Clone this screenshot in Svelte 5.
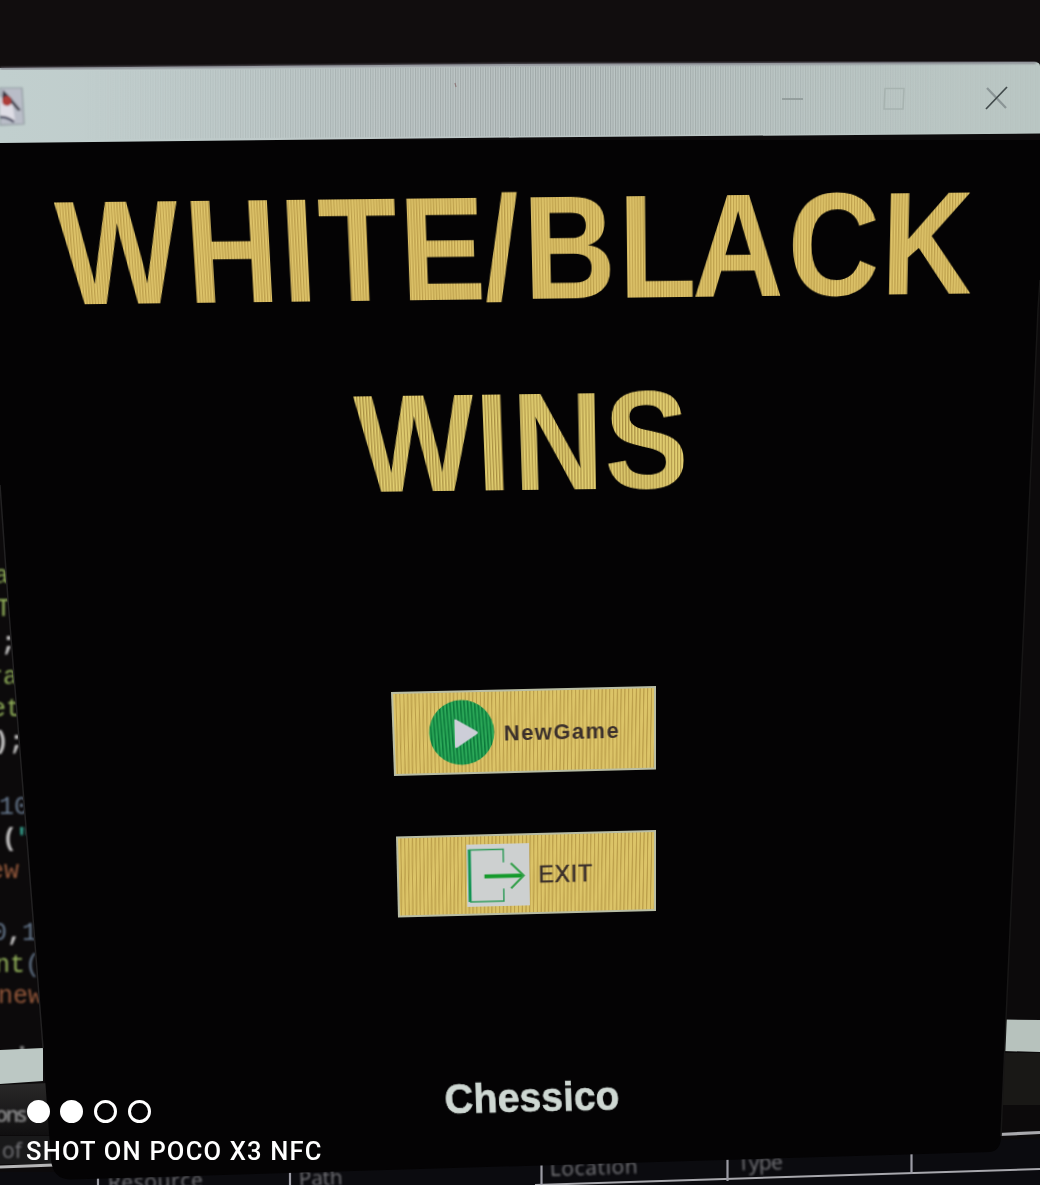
<script>
  // Builds the CSS matrix that maps a w×h box onto four corners
  // (top-left, top-right, bottom-right, bottom-left), relative to the box origin.
  function project(w, h, ox, oy, corners) {
    const [[x0, y0], [x1, y1], [x2, y2], [x3, y3]] = corners.map(([x, y]) => [x - ox, y - oy]);
    const dx1 = x1 - x2, dx2 = x3 - x2, sx = x0 - x1 + x2 - x3;
    const dy1 = y1 - y2, dy2 = y3 - y2, sy = y0 - y1 + y2 - y3;
    const den = dx1 * dy2 - dx2 * dy1;
    const g = (sx * dy2 - dx2 * sy) / den;
    const k = (dx1 * sy - sx * dy1) / den;
    const m = [
      (x1 - x0 + g * x1) / w, (y1 - y0 + g * y1) / w, 0, g / w,
      (x3 - x0 + k * x3) / h, (y3 - y0 + k * y3) / h, 0, k / h,
      0, 0, 1, 0,
      x0, y0, 0, 1
    ];
    return `matrix3d(${m.map((v) => v.toFixed(9)).join(',')})`;
  }

  const tilt = {
    title: project(920, 100, 60, 200, [[53, 202.5], [973, 192.5], [970, 293.5], [61, 304.5]]),
    wins: project(330, 96, 355, 395, [[353, 396.5], [684, 392], [684, 488], [359, 492]]),
    play: project(264, 84, 388, 690, [[391, 692], [656, 686], [656, 769.5], [394, 776]]),
    exit: project(260, 82, 390, 833, [[396, 836.5], [656, 830], [656, 911], [398, 917.5]]),
    brand: project(176, 28, 432, 1084, [[444, 1083.5], [619, 1080], [620, 1109.5], [445, 1113.5]])
  };
</script>

<div class="photo">
  <svg class="scene" viewBox="0 0 1040 1185" aria-hidden="true">
    <defs>
      <linearGradient id="fadeBand" x1="0" y1="0" x2="0" y2="1">
        <stop offset="0" stop-color="#292828" />
        <stop offset="1" stop-color="#100f10" />
      </linearGradient>
      <linearGradient id="bar" x1="0" y1="0" x2="1" y2="0">
        <stop offset="0" stop-color="#c1cfce" />
        <stop offset="0.45" stop-color="#bdc6c6" />
        <stop offset="1" stop-color="#bac7c4" />
      </linearGradient>
      <linearGradient id="moireFade" x1="0" y1="0" x2="1" y2="0">
        <stop offset="0.08" stop-color="#000" />
        <stop offset="0.35" stop-color="#aaa" />
        <stop offset="0.55" stop-color="#fff" />
        <stop offset="0.72" stop-color="#999" />
        <stop offset="0.92" stop-color="#111" />
      </linearGradient>
      <mask id="moireMask"><rect width="1040" height="150" fill="url(#moireFade)" /></mask>
      <pattern id="barLines" width="2.5" height="10" patternUnits="userSpaceOnUse">
        <rect width="1.1" height="10" fill="#7d8585" />
      </pattern>
      <filter id="soft" x="-10%" y="-10%" width="120%" height="120%"><feGaussianBlur stdDeviation="0.8" /></filter>
    </defs>

    <rect width="1040" height="1185" fill="#0c0a0b" />
    <rect width="1040" height="70" fill="#110d0e" />

    <g class="code" filter="url(#soft)">
      <text class="green" x="-6" y="583">a</text>
      <text class="green" x="-4" y="616">T</text>
      <text class="white" x="1" y="650">;</text>
      <text class="green" x="-12" y="684">ra</text>
      <text class="green" x="-9" y="716">et</text>
      <text class="white" x="-6" y="749">);</text>
      <text class="blue" x="-1" y="814">10</text>
      <text class="white" x="2" y="846">(<tspan class="teal">"</tspan></text>
      <text class="rust" x="-11" y="878">ew</text>
      <text class="blue" x="-8" y="940">0<tspan class="white">,</tspan>1</text>
      <text class="green" x="-5" y="972">nt<tspan class="blue">(</tspan></text>
      <text class="rust" x="-2" y="1003">new</text>
      <rect class="speck" x="20" y="1046" width="4" height="5" />
    </g>

    <path d="M0 1050L43 1048V1081L0 1084Z" fill="#bcc8c4" />
    <path d="M0 1085L50 1083V1135H0Z" fill="url(#fadeBand)" />
    <path d="M0 1136H52V1164H0Z" fill="#19191a" />
    <path d="M0 1167L54 1165" stroke="#b5b5b6" stroke-width="3" />
    <path d="M1004 1019.5L1040 1020V1052L1003 1051Z" fill="#b7c2bd" />
    <path d="M1002 1053H1040V1105H1001Z" fill="#191816" />
    <path d="M999 1134.5L1040 1132.5" stroke="#a9a9ad" stroke-width="3.2" />
    <path d="M50 1172L1040 1138V1185H0V1172Z" fill="#0b0b0f" />
    <path d="M535 1185L1040 1169" stroke="#a8a8ad" stroke-width="2" />
    <path d="M98 1174V1185M290 1168V1185M541.500 1160V1185M727.500 1154V1181M911.500 1150V1174" stroke="#9b9ba4" stroke-width="2.2" />
    <g class="heads" filter="url(#soft)">
      <text transform="translate(108 1190) rotate(-1.800)" textLength="95">Resource</text>
      <text transform="translate(299 1186) rotate(-1.800)" textLength="44">Path</text>
      <text transform="translate(550 1176) rotate(-1.800)" textLength="88">Location</text>
      <text transform="translate(738 1170.500) rotate(-1.800)" textLength="45">Type</text>
      <text class="bold" x="-5" y="1122" textLength="32">ons</text>
      <text x="2" y="1158">of</text>
    </g>

    <path d="M0 140H1040V290L1038 310L1006 1020L1001 1138Q1000 1151 990 1152L70 1179.500Q53 1179 51 1160L43 1050L27 840L8 600L0 480Z" fill="#040304" />
    <path d="M0 485L8 600L27 840L43 1048" fill="none" stroke="#222122" stroke-width="1.5" />
    <path d="M1040 280L1038 310L1006 1020L1001 1136" fill="none" stroke="#171616" stroke-width="1.500" />

    <path d="M0 68L520 64L1034 62Q1040 62 1040 66V133.500L520 137.500L0 143Z" fill="url(#bar)" />
    <path d="M0 72L520 67L1040 64V132L520 136L0 140Z" fill="url(#barLines)" mask="url(#moireMask)" opacity="0.5" />
    <path d="M0 68.500L520 64.500L1036 62.500" fill="none" stroke="#77747f" stroke-width="2" filter="url(#soft)" />
    <g filter="url(#soft)">
      <path d="M0 88H22L24 124L0 125Z" fill="#b9bdc8" stroke="#8e989d" stroke-width="1.200" />
      <path d="M0 97L12 99L15 121L0 117Z" fill="#dedde5" />
      <path d="M3 90L12 99L9 104L2 99Z" fill="#35303c" />
      <circle cx="7" cy="101" r="5" fill="#ad3c38" />
      <path d="M11 98L21 110L18 111L11 103Z" fill="#464753" />
      <path d="M0 117Q8 117 14 122" fill="none" stroke="#4a4b62" stroke-width="2.500" />
    </g>
    <path d="M455 83L456 87" stroke="#8b7778" stroke-width="1.200" />
    <path d="M782 99H803" stroke="#919b9a" stroke-width="1.800" />
    <path d="M885 88.500H904L903 109H884Z" fill="none" stroke="#a7b3b0" stroke-width="1.500" />
    <path d="M987 88L1006 108" stroke="#8b9596" stroke-width="2.300" />
    <path d="M986 109L1007 87" stroke="#414a4b" stroke-width="1.700" />
  </svg>

  <main>
    <h1 style:transform={tilt.title}>
      <svg viewBox="0 0 7136 688" preserveAspectRatio="none">
        <defs>
          <pattern id="goldWide" width="22" height="688" patternUnits="userSpaceOnUse">
            <rect width="22" height="688" fill="#e0c66c" />
            <rect width="9" height="688" fill="#bb9d4a" />
          </pattern>
        </defs>
        <text fill="url(#goldWide)" y="688" x="6 990 1729 2028 2655 3310 3618 4362 4938 5690 6426">WHITE/BLACK</text>
      </svg>
    </h1>
    <h2 style:transform={tilt.wins}>
      <svg viewBox="0 0 2600 688" preserveAspectRatio="none">
        <defs>
          <pattern id="goldNarrow" width="24" height="688" patternUnits="userSpaceOnUse">
            <rect width="24" height="688" fill="#e2cf72" />
            <rect width="9" height="688" fill="#a98f42" />
          </pattern>
        </defs>
        <text fill="url(#goldNarrow)" y="688" x="0 949 1242 1969">WINS</text>
      </svg>
    </h2>

    <button class="play" style:transform={tilt.play}>
      <svg class="icon" viewBox="0 0 66 66">
        <defs>
          <pattern id="greenLines" width="3.500" height="66" patternUnits="userSpaceOnUse" patternTransform="rotate(-3)">
            <rect width="3.500" height="66" fill="#2caa59" />
            <rect width="1.500" height="66" fill="#0a7639" />
          </pattern>
        </defs>
        <circle cx="33" cy="33" r="32.500" fill="url(#greenLines)" />
        <path d="M26 20.500Q26 19 28 20L48 32Q50 33.500 48 35L28 48Q26 49 26 47Z" fill="#cdced8" />
      </svg>
      <span>NewGame</span>
    </button>

    <button class="exit" style:transform={tilt.exit}>
      <svg class="icon" viewBox="0 0 64 64">
        <rect width="64" height="64" fill="#cdd0d0" />
        <path d="M3 5V59" stroke="#119453" stroke-width="3" />
        <path d="M3 5.500H37.500V19M37.500 46V59H3" fill="none" stroke="#329c5b" stroke-width="1.500" />
        <path d="M18 33H57" stroke="#159a2c" stroke-width="4" />
        <path d="M45 20L58 33L45 46" fill="none" stroke="#35a04b" stroke-width="2.200" />
      </svg>
      <span>EXIT</span>
    </button>

    <p class="brand" style:transform={tilt.brand}>Chessico</p>
  </main>

  <footer>
    <div class="dots"><i class="full"></i><i class="full"></i><i></i><i></i></div>
    <div class="shot">SHOT ON POCO X3 NFC</div>
  </footer>
</div>

<style>
  :global(body) { margin: 0; background: #0c0a0b; }
  .photo {
    position: relative;
    width: 1040px;
    height: 1185px;
    overflow: hidden;
    font-family: "Liberation Sans", Arial, sans-serif;
  }
  .scene { position: absolute; inset: 0; width: 1040px; height: 1185px; }
  .code { font: 25px "Liberation Mono", monospace; }
  .green { fill: #94b45c; }
  .white { fill: #c6c5c5; font-weight: bold; }
  .blue { fill: #66788e; }
  .teal { fill: #35a08d; }
  .rust { fill: #95583a; }
  .speck { fill: #777; }
  .heads { font: 21px "Open Sans", sans-serif; fill: #77777b; }
  .bold { font-weight: 600; fill: #8b8b8c; }

  main {
    position: relative;
    box-sizing: border-box;
    height: 1112px;
    padding-top: 200px;
    display: flex;
    flex-direction: column;
    align-items: center;
  }
  main > * { flex: none; margin: 0; transform-origin: 0 0; }
  h1, h2 { font-weight: bold; font-size: 1000px; line-height: 0; }
  h1 { width: 920px; height: 100px; }
  h2 { width: 330px; height: 96px; margin-top: 95px; }
  h1 svg, h2 svg { display: block; width: 100%; height: 100%; overflow: visible; }
  h1 text, h2 text { font-size: 1000px; font-kerning: none; }

  button {
    box-sizing: border-box;
    display: flex;
    align-items: center;
    padding: 0;
    border: 2px solid #b9bda4;
    border-radius: 0;
    color: #3b302c;
    font: bold 22px "Liberation Sans", Arial, sans-serif;
    background: repeating-linear-gradient(91deg, #dcc468 0 2px, #ba9d49 2.600px 3.200px, #dcc468 3.800px);
  }
  button span { padding-top: 3px; }
  .play { width: 264px; height: 84px; margin-top: 199px; padding-left: 34px; gap: 9px; letter-spacing: 1.5px; }
  .play .icon { width: 66px; height: 66px; }
  .exit { width: 260px; height: 82px; margin-top: 59px; padding-left: 67px; gap: 8px; font-weight: normal; font-size: 23px; letter-spacing: 0.9px; -webkit-text-stroke: 0.500px #3b302c; }
  .exit .icon { width: 65px; height: 63px; }

  .brand {
    width: 176px;
    height: 28px;
    margin-top: 169px;
    line-height: 28px;
    font-size: 39.500px;
    font-weight: bold;
    color: #ced7d2;
    -webkit-text-stroke: 0.600px #ced7d2;
    filter: blur(0.500px);
    white-space: nowrap;
  }

  footer {
    position: relative;
    margin-top: -12px;
    padding-left: 26px;
    color: #fff;
    font-family: Roboto, sans-serif;
  }
  .dots { display: flex; gap: 10.800px; padding-left: 0.500px; }
  .dots i { box-sizing: border-box; width: 23px; height: 23px; border: 3px solid #fff; border-radius: 50%; }
  .dots .full { background: #fff; }
  .shot { margin-top: 13px; font-size: 25.500px; line-height: 30px; font-weight: 500; letter-spacing: 1.200px; white-space: nowrap; }
</style>
